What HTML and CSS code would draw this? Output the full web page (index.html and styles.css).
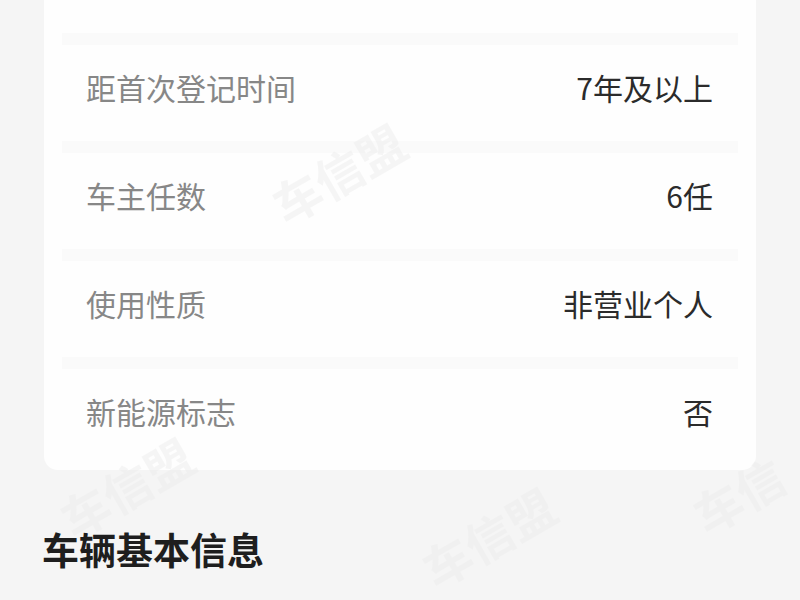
FILE: index.html
```html
<!DOCTYPE html>
<html lang="zh-CN">
<head>
<meta charset="utf-8">
<title>车辆信息</title>
<link rel="stylesheet" href="styles.css">
</head>
<body>
<main class="page">
  <section class="card">
    <div class="row">
      <span class="label">距首次登记时间</span>
      <span class="value">7年及以上</span>
    </div>
    <div class="row">
      <span class="label">车主任数</span>
      <span class="value">6任</span>
    </div>
    <div class="row">
      <span class="label">使用性质</span>
      <span class="value">非营业个人</span>
    </div>
    <div class="row">
      <span class="label">新能源标志</span>
      <span class="value">否</span>
    </div>
  </section>
  <h2 class="section-title">车辆基本信息</h2>
</main>
<div class="watermarks" aria-hidden="true">
  <span class="wm wm-1">车信盟</span>
  <span class="wm wm-2">车信盟</span>
  <span class="wm wm-3">车信盟</span>
  <span class="wm wm-4">车信</span>
</div>
</body>
</html>
```

FILE: styles.css
```css
* { box-sizing: border-box; }

html, body {
  margin: 0;
  padding: 0;
  background: #f5f5f5;
  font-family: "Noto Sans CJK SC", "Noto Sans", sans-serif;
  overflow: hidden;
}

body {
  width: 800px;
  height: 600px;
  position: relative;
}

.page {
  padding: 0 44px;
}

.card {
  background: #fefefe;
  border-radius: 0 0 14px 14px;
  padding: 33px 18px 5px;
}

.row {
  display: flex;
  justify-content: space-between;
  align-items: center;
  border-top: 12px solid #fafafa;
  padding: 27px 25px 39px 24px;
  line-height: 30px;
  font-size: 30px;
}

.label {
  color: #878787;
}

.value {
  color: #2b2b2b;
}

.section-title {
  margin: 61px -2px 0;
  font-size: 37px;
  line-height: 36px;
  font-weight: 700;
  color: #1e1e1e;
}

.watermarks {
  position: absolute;
  inset: 0;
  pointer-events: none;
}

.wm {
  position: absolute;
  font-size: 48px;
  font-weight: 700;
  color: #ececec;
  opacity: 0.45;
  transform: rotate(-30deg);
  white-space: nowrap;
  line-height: 1;
}

.wm-1 { left: 266px; top: 148px; }
.wm-2 { left: 54px; top: 462px; }
.wm-3 { left: 416px; top: 512px; }
.wm-4 { left: 690px; top: 470px; }
```
